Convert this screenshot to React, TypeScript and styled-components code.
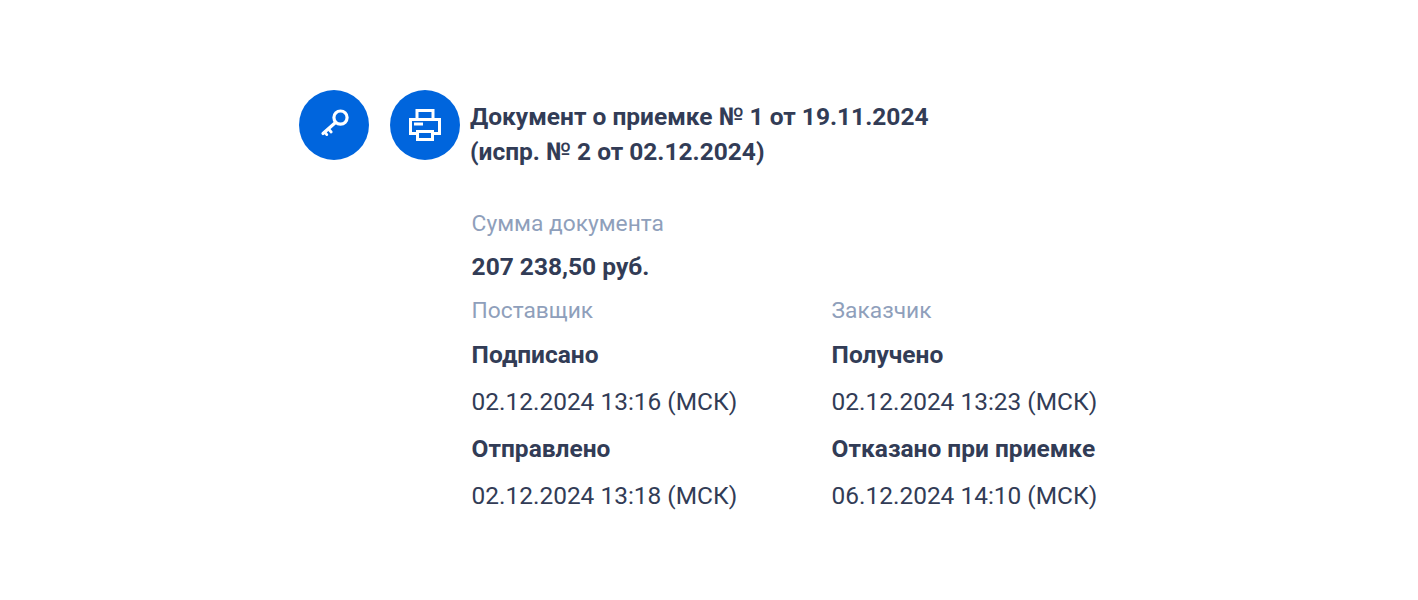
import styled, { createGlobalStyle } from 'styled-components';

const GlobalStyle = createGlobalStyle`
  html, body {
    margin: 0;
    padding: 0;
    background: #fff;
  }
  body {
    font-family: Roboto, "Liberation Sans", sans-serif;
    color: #323c56;
  }
`;

const Page = styled.div`
  display: flex;
  align-items: flex-start;
  height: 600px;
  padding: 90px 0 0 299px;
  box-sizing: border-box;
`;

const RoundButton = styled.div<{ $gap: number }>`
  flex: none;
  width: 70px;
  height: 70px;
  margin-right: ${({ $gap }) => $gap}px;
  border-radius: 50%;
  background: #0065dd;
  display: flex;
  align-items: center;
  justify-content: center;
`;

const Content = styled.div`
  display: flex;
  flex-direction: column;
`;

const Title = styled.h1`
  margin: 9px 0 0;
  font-size: 24.5px;
  line-height: 35px;
  font-weight: 700;
`;

const Details = styled.div`
  margin: 33px 0 0 1.6px;
`;

const Label = styled.div<{ $height?: number }>`
  font-size: 22.75px;
  line-height: ${({ $height }) => $height ?? 44}px;
  font-weight: 400;
  color: #8f9fbb;
`;

const Strong = styled.div`
  font-size: 24.5px;
  line-height: 44px;
  font-weight: 700;
`;

const Plain = styled.div`
  font-size: 24.45px;
  line-height: 50px;
  font-weight: 400;
`;

const Columns = styled.div`
  display: grid;
  grid-template-columns: 360px 360px;
`;

const KeyIcon = () => (
  <svg width="32" height="32" viewBox="0 0 32 32" fill="none" stroke="#fff" strokeLinecap="round">
    <circle cx="22.5" cy="8.6" r="6.6" strokeWidth="3.2" />
    <path d="M17.5 13.5 L5 24.5" strokeWidth="3.2" />
    <path d="M10.5 20 L13.2 23 M6.8 23.2 L8.8 25.6" strokeWidth="2.8" />
  </svg>
);

const PrinterIcon = () => (
  <svg width="32" height="32" viewBox="0 0 32 32" fill="none" stroke="#fff" strokeWidth="3">
    <path d="M8 9 V1.5 H24 V9" />
    <path d="M7 24.5 H1.5 V10.5 H30.5 V24.5 H25" />
    <rect x="8.5" y="22.5" width="15" height="8" />
    <path d="M5 15 H14" />
  </svg>
);

const parties = [
  {
    name: 'Поставщик',
    events: [
      ['Подписано', '02.12.2024 13:16 (МСК)'],
      ['Отправлено', '02.12.2024 13:18 (МСК)'],
    ],
  },
  {
    name: 'Заказчик',
    events: [
      ['Получено', '02.12.2024 13:23 (МСК)'],
      ['Отказано при приемке', '06.12.2024 14:10 (МСК)'],
    ],
  },
];

export default function App() {
  return (
    <>
      <GlobalStyle />
      <Page>
        <RoundButton $gap={21}>
          <KeyIcon />
        </RoundButton>
        <RoundButton $gap={10}>
          <PrinterIcon />
        </RoundButton>
        <Content>
          <Title>
            Документ о приемке № 1 от 19.11.2024
            <br />
            (испр. № 2 от 02.12.2024)
          </Title>
          <Details>
            <Label $height={43}>Сумма документа</Label>
            <Strong>207 238,50 руб.</Strong>
            <Columns>
              {parties.map((party) => (
                <div key={party.name}>
                  <Label>{party.name}</Label>
                  {party.events.map(([title, date]) => (
                    <div key={title}>
                      <Strong>{title}</Strong>
                      <Plain>{date}</Plain>
                    </div>
                  ))}
                </div>
              ))}
            </Columns>
          </Details>
        </Content>
      </Page>
    </>
  );
}
